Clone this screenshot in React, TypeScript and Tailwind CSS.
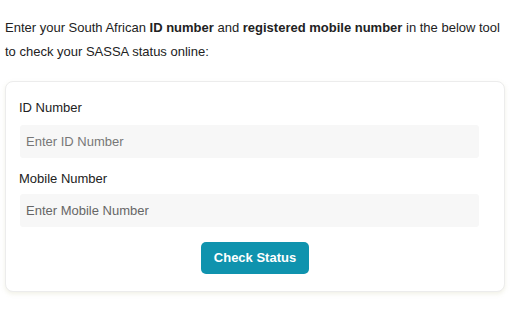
export default function App() {
  return (
    <div className="w-[512px] h-[320px] bg-white overflow-hidden" style={{ fontFamily: '"Liberation Sans", Arial, sans-serif' }}>
      <p className="pt-[16px] pl-[5px] pr-[10px] text-[13px] leading-[24px] text-[#222]">
        Enter your South African <b>ID number</b> and <b>registered mobile number</b> in the below tool to check your SASSA status online:
      </p>
      <div className="ml-[5px] mt-[17px] w-[500px] rounded-[8px] border border-[#ececec] bg-white pl-[13px] pr-[25px] pt-[18px] pb-[17px] shadow-[0_2px_4px_rgba(200,200,160,0.25)]">
        <div className="text-[13px] leading-[16px] text-[#222]">ID Number</div>
        <div className="mt-[9px] ml-[1px] h-[33px] w-[459px] rounded-[3px] bg-[#f7f7f7] pl-[6px] flex items-center text-[13px] text-[#777]">
          Enter ID Number
        </div>
        <div className="mt-[13px] text-[13px] leading-[16px] text-[#222]">Mobile Number</div>
        <div className="mt-[7px] ml-[1px] h-[33px] w-[459px] rounded-[3px] bg-[#f7f7f7] pl-[6px] flex items-center text-[13px] text-[#666]">
          Enter Mobile Number
        </div>
        <div className="mt-[15px] flex justify-center pl-[12px]">
          <button className="h-[32px] w-[108px] rounded-[5px] bg-[#0f93ae] text-white font-bold text-[13px]">
            Check Status
          </button>
        </div>
      </div>
    </div>
  );
}
